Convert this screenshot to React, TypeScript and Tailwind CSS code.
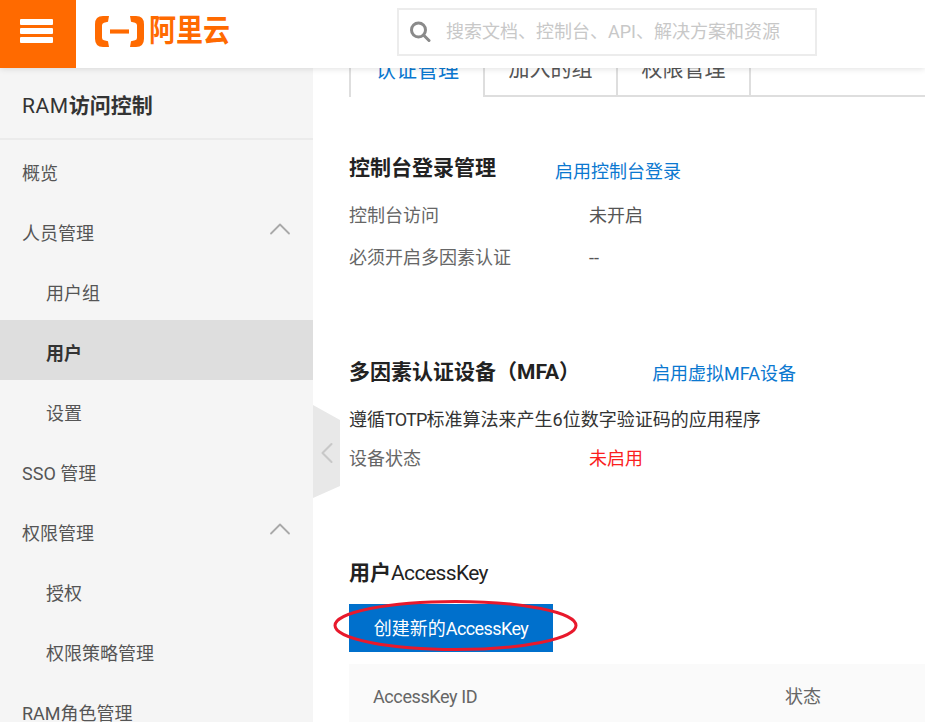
import React from 'react';
import { ChevronUp, ChevronLeft } from 'lucide-react';

const font = "font-['Roboto','Noto_Sans_CJK_SC',sans-serif]";

type NavItem = { label: string; sub?: boolean; active?: boolean; open?: boolean };

const navItems: NavItem[] = [
  { label: '概览' },
  { label: '人员管理', open: true },
  { label: '用户组', sub: true },
  { label: '用户', sub: true, active: true },
  { label: '设置', sub: true },
  { label: 'SSO 管理' },
  { label: '权限管理', open: true },
  { label: '授权', sub: true },
  { label: '权限策略管理', sub: true },
  { label: 'RAM角色管理' },
];

const Header: React.FC = () => (
  <header className="absolute top-0 left-0 right-0 z-20 h-[68px] bg-white shadow-[0_1px_6px_rgba(0,0,0,0.12)] flex">
    <div className="w-[76px] h-full bg-[#ff6a00] flex flex-col items-start pl-[20px] pt-[19px] gap-[3px]">
      <span className="block w-[33px] h-[6px] bg-white rounded-[1px]" />
      <span className="block w-[33px] h-[6px] bg-white rounded-[1px]" />
      <span className="block w-[33px] h-[6px] bg-white rounded-[1px]" />
    </div>
    <div className="flex items-center pb-[5px]">
      <div className="flex items-center ml-[19px] w-[302px]">
        <svg width="49" height="31" viewBox="0 0 49 30" fill="#ff6a00" preserveAspectRatio="none">
          <path d="M14 0H8Q0 0 0 8V22Q0 30 8 30H14L13 24.500 9 23.500Q7 23 7 21V9Q7 7 9 6.500L13 5.500Z" />
          <path d="M35 0H41Q49 0 49 8V22Q49 30 41 30H35L36 24.500 40 23.500Q42 23 42 21V9Q42 7 40 6.500L36 5.500Z" />
          <rect x="15" y="13" width="19" height="4" />
        </svg>
        <span className="ml-[5px] text-[27px] leading-none font-bold text-[#ff6a00] scale-y-[1.15]">阿里云</span>
      </div>
      <div className="w-[420px] h-[48px] border-2 border-[#ececec] flex items-center pl-[10px]">
        <svg width="22" height="22" viewBox="0 0 22 22" fill="none" stroke="#8a8a8a" strokeWidth="3">
          <circle cx="9.500" cy="9" r="7" />
          <path d="M14.500 14l5.500 5.500" strokeLinecap="round" />
        </svg>
        <span className="ml-[15px] text-[18px] text-[#c8c8c8] whitespace-nowrap">搜索文档、控制台、API、解决方案和资源</span>
      </div>
    </div>
  </header>
);

const Sidebar: React.FC = () => (
  <aside className="w-[313px] shrink-0 h-full bg-[#f5f5f5] pt-[68px] overflow-hidden">
    <div className="h-[72px] pt-[7px] flex items-center pl-[22px] border-b-2 border-[#ebebeb] text-[21px] text-[#333]">
      <span className="tracking-[0.6px]">RAM</span><span className="font-bold">访问控制</span>
    </div>
    <nav>
      {navItems.map(item => (
        <div
          key={item.label}
          className={`h-[60px] pt-[6px] flex items-center justify-between pr-[15px] text-[18px] ${item.sub ? 'pl-[46px]' : 'pl-[22px]'} ${
            item.active ? 'bg-[#dedede] font-bold text-[#333]' : 'text-[#555]'
          }`}
        >
          <span>{item.label}</span>
          {item.open && <ChevronUp size={36} strokeWidth={1.2} className="text-[#a9a9a9] -mt-2" />}
        </div>
      ))}
    </nav>
  </aside>
);

const InfoRow: React.FC<{ label: string; value: string; valueClass?: string }> = ({ label, value, valueClass }) => (
  <div className="flex items-center h-[42px] text-[18px]">
    <span className="w-[240px] text-[#666]">{label}</span>
    <span className={valueClass ?? 'text-[#555]'}>{value}</span>
  </div>
);

const Main: React.FC = () => (
  <main className="flex-1 min-w-0 h-full overflow-hidden pl-[36px]">
    {/* tabs run up under the fixed header */}
    <div className="h-[52px] mt-[45px] flex items-stretch text-[21px] border-b-2 border-[#dedede]">
      <div className="w-[136px] -mb-[2px] bg-white border-l-2 border-r-2 border-[#dedede] flex items-center justify-center text-[#0b78d0]">认证管理</div>
      <div className="w-[133px] border-r-2 border-[#dedede] flex items-center justify-center text-[#555]">加入的组</div>
      <div className="w-[133px] border-r-2 border-[#dedede] flex items-center justify-center text-[#555]">权限管理</div>
    </div>

    <section className="mt-[52px]">
      <div className="flex items-center h-[40px]">
        <h3 className="text-[21px] font-bold text-[#222]">控制台登录管理</h3>
        <span className="ml-[59px] mt-[4px] text-[18px] text-[#0b78d0]">启用控制台登录</span>
      </div>
      <div className="mt-[5px]">
        <InfoRow label="控制台访问" value="未开启" />
        <InfoRow label="必须开启多因素认证" value="--" />
      </div>
    </section>

    <section className="mt-[75px]">
      <div className="flex items-center h-[40px]">
        <h3 className="text-[21px] font-bold text-[#222]">多因素认证设备（MFA）</h3>
        <span className="ml-[72px] text-[18px] text-[#0b78d0]">启用虚拟MFA设备</span>
      </div>
      <p className="mt-[5px] h-[42px] flex items-center text-[18px] text-[#333] whitespace-nowrap">
        遵循<span className="tracking-[-0.8px]">TOTP</span>标准算法来产生6位数字验证码的应用程序
      </p>
      <div className="-mt-[3px]">
        <InfoRow label="设备状态" value="未启用" valueClass="text-[#fa1e1e]" />
      </div>
    </section>

    <section className="mt-[75px]">
      <h3 className="h-[40px] flex items-center text-[21px] text-[#222]">
        <span className="font-bold">用户</span><span className="tracking-[-0.6px]">AccessKey</span>
      </h3>
      <div className="relative mt-[10px] w-[204px] h-[48px] bg-[#0070cc] flex items-center justify-center text-[18px] text-white">
        <span>创建新的<span className="tracking-[-0.6px]">AccessKey</span></span>
        <svg className="absolute left-[-16px] top-[-4px]" width="248" height="54" viewBox="0 0 248 54" fill="none">
          <ellipse cx="122.500" cy="25.500" rx="120.500" ry="24" stroke="#e8192c" strokeWidth="3" />
        </svg>
      </div>
      <div className="mt-[12px] h-[64px] bg-[#fafafa] flex items-center text-[18px] text-[#666]">
        <span className="w-[436px] pl-[24px] tracking-[-0.4px]">AccessKey ID</span>
        <span>状态</span>
      </div>
    </section>
  </main>
);

const App: React.FC = () => (
  <div className={`relative w-[925px] h-[722px] overflow-hidden bg-white flex ${font}`}>
    <Header />
    <Sidebar />
    <Main />
    {/* collapse handle on the sidebar edge */}
    <div className="absolute left-[313px] top-[405px] w-[27px] h-[93px] bg-[#e8e8e8] [clip-path:polygon(0_0,100%_16%,100%_87%,0_100%)] flex items-center justify-center">
      <ChevronLeft size={36} strokeWidth={1.4} className="text-[#c8c8c8] shrink-0 mt-[3px]" />
    </div>
  </div>
);

export default App;
